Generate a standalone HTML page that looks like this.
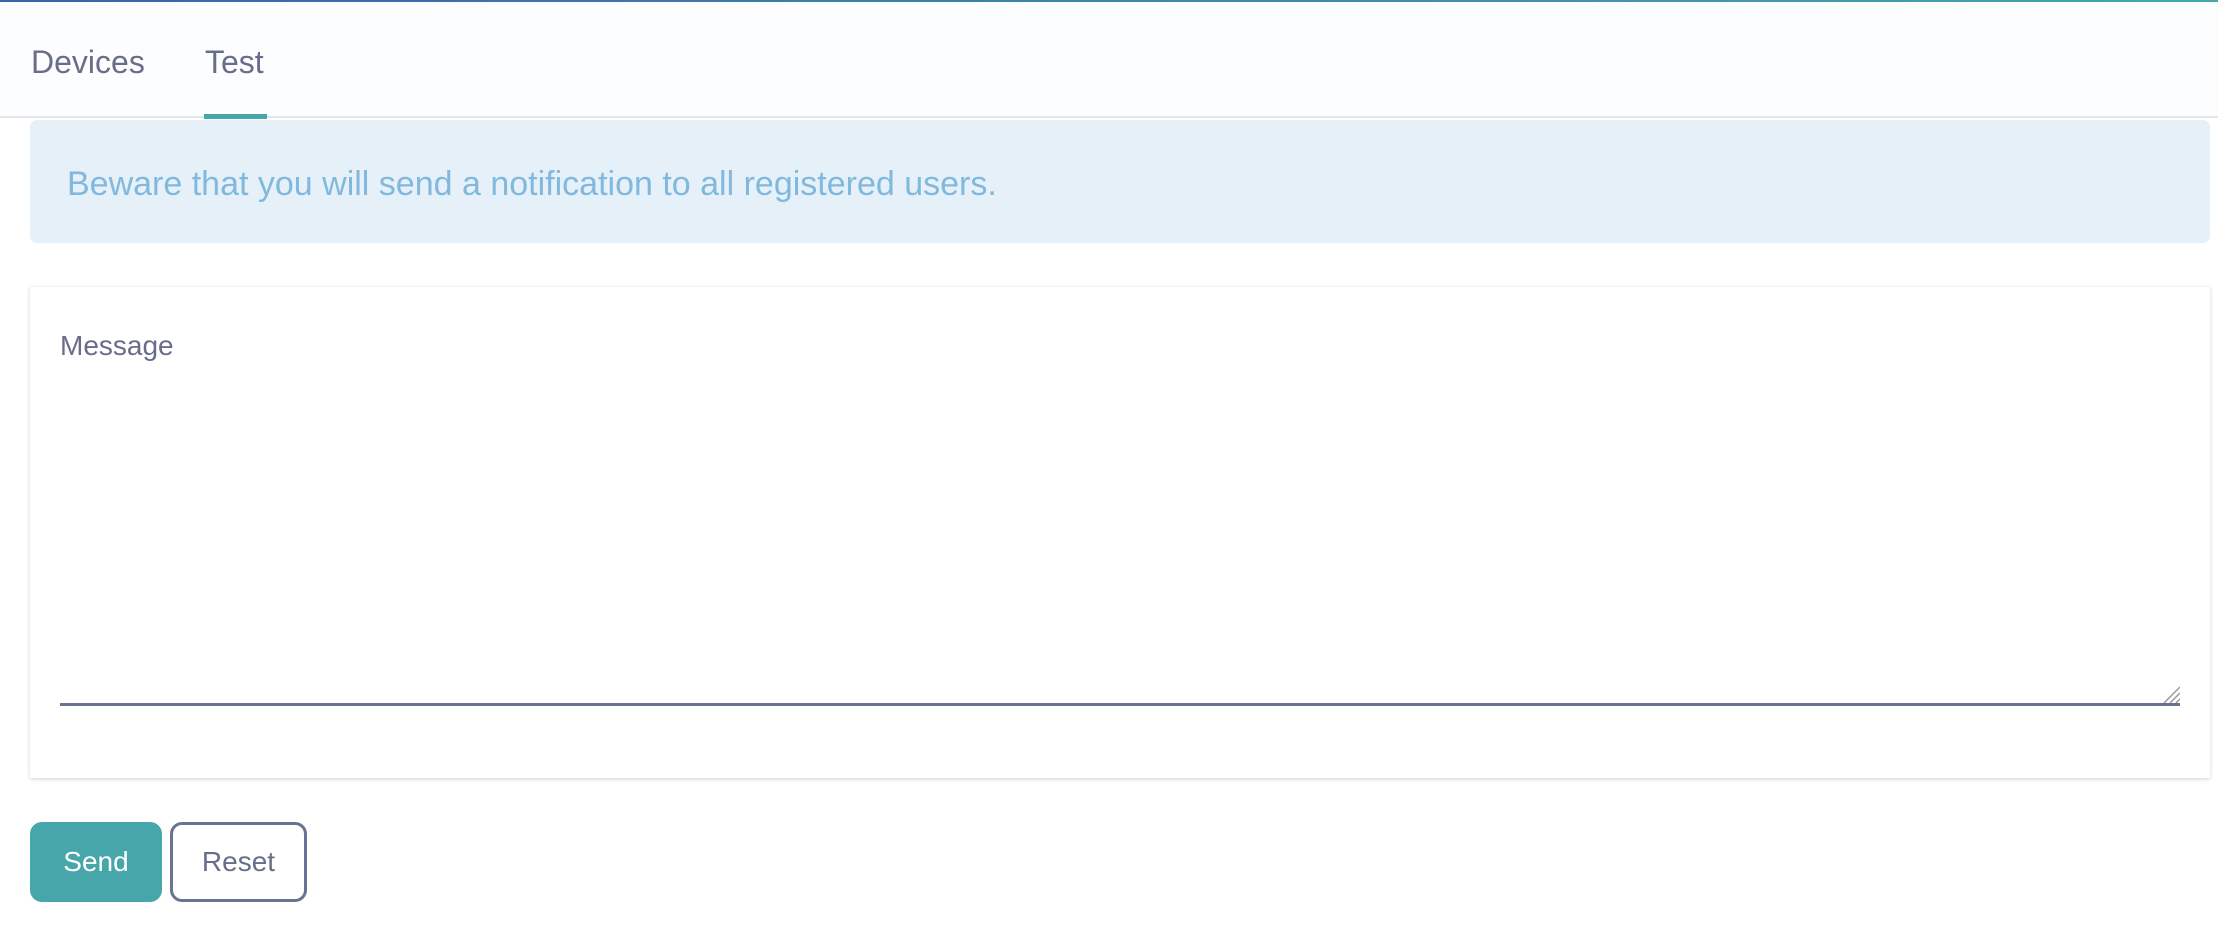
<!DOCTYPE html>
<html><head><meta charset="utf-8"><style>
*{box-sizing:border-box;margin:0;padding:0}
body{width:2218px;height:952px;background:#fff;font-family:"Liberation Sans",sans-serif;position:relative;overflow:hidden}
.topline{position:absolute;left:0;top:0;width:2218px;height:2px;background:linear-gradient(90deg,#3a64a8,#46a6aa)}
.header{position:absolute;left:0;top:2px;width:2218px;height:116px;background:#fcfdfe;border-bottom:2px solid #e2e5e9}
.tab{position:absolute;top:42px;font-size:32px;color:#686e8a}
.ul{position:absolute;left:204px;top:114px;width:63px;height:5px;background:#46a6aa}
.alert{position:absolute;left:30px;top:120px;width:2180px;height:123px;background:#e6f0f9;border-radius:7px}
.alert span{position:absolute;left:37px;top:47px;font-size:34px;line-height:1;color:#80b9dd}
.card{position:absolute;left:30px;top:287px;width:2180px;height:491px;background:#fff;box-shadow:0 1px 4px rgba(0,0,0,.18)}
.label{position:absolute;left:30px;top:43px;font-size:28px;color:#686e8a}
.line{position:absolute;left:30px;top:416px;width:2120px;height:3px;background:#6b7190}
.grip{position:absolute;left:2130px;top:396px;width:20px;height:20px}
.btn{position:absolute;top:822px;height:80px;border-radius:12px;font-size:28px;display:flex;align-items:center;justify-content:center}
.send{left:30px;width:132px;background:#46a6aa;color:#fff}
.reset{left:170px;width:137px;border:3px solid #6b7190;color:#686e8a;background:#fff}
</style></head><body>
<div class="topline"></div>
<div class="header">
<div class="tab" style="left:31px">Devices</div>
<div class="tab" style="left:205px">Test</div>
</div>
<div class="ul"></div>
<div class="alert"><span>Beware that you will send a notification to all registered users.</span></div>
<div class="card">
<div class="label">Message</div>
<svg class="grip" viewBox="0 0 20 20"><path d="M20 4L4 20M20 10L10 20M20 16L16 20" stroke="#999" stroke-width="1.5"/></svg>
<div class="line"></div>
</div>
<div class="btn send">Send</div>
<div class="btn reset">Reset</div>
</body></html>
